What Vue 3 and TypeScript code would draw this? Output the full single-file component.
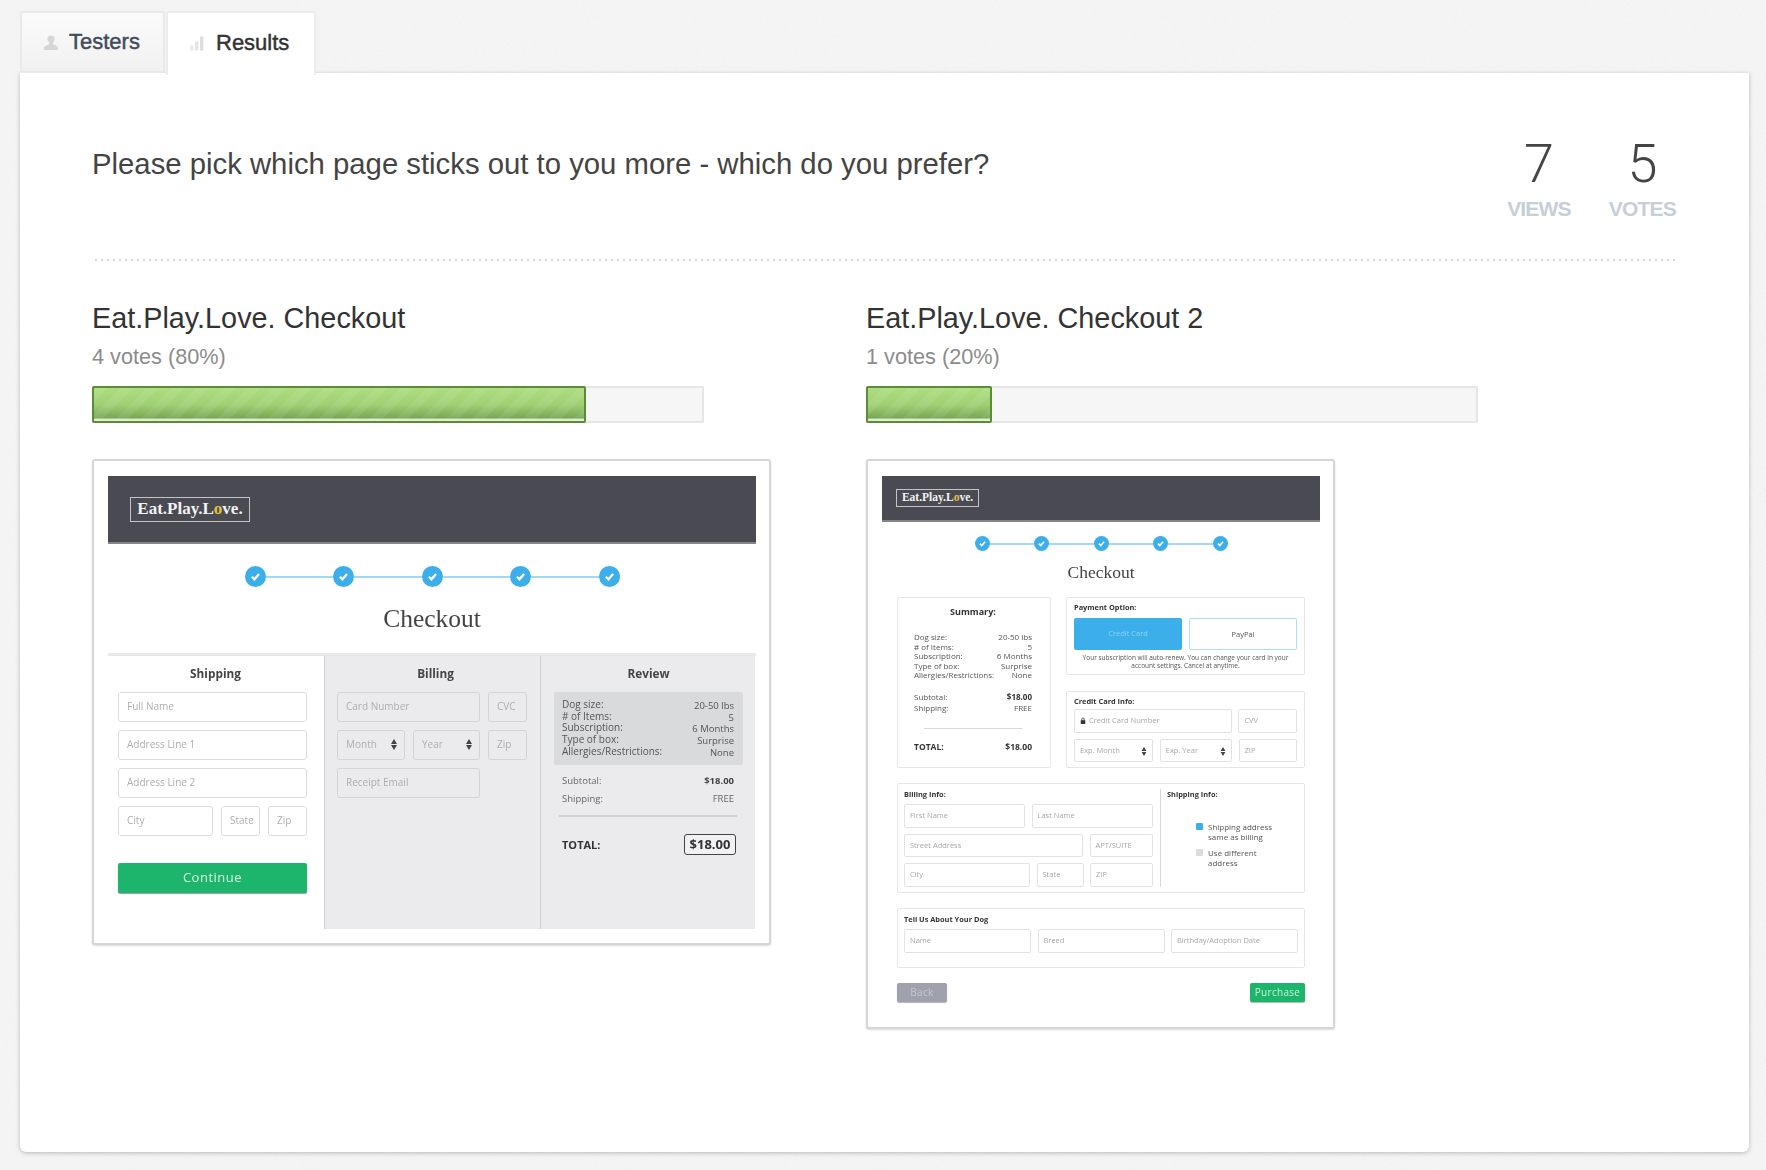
<template>
  <div class="page">
    <svg class="noise" aria-hidden="true">
      <filter id="paper">
        <feTurbulence type="fractalNoise" baseFrequency="0.9" numOctaves="2" seed="4" />
        <feColorMatrix values="0 0 0 0 0.84  0 0 0 0 0.84  0 0 0 0 0.84  0 0 0 1.4 -0.66" />
      </filter>
      <rect width="100%" height="100%" filter="url(#paper)" />
    </svg>

    <div class="tabs">
      <a class="tab">
        <svg class="tab-icon" viewBox="0 0 14 15">
          <circle cx="7" cy="4" r="3.6" fill="#d6d6d6" />
          <path d="M5 7h4v2l5 3v3H0v-3l5-3z" fill="#d6d6d6" />
        </svg>
        Testers
      </a>
      <a class="tab active">
        <svg class="tab-icon" viewBox="0 0 14 14">
          <rect x="0" y="9" width="3.4" height="5" fill="#e8e8e8" />
          <rect x="5" y="5" width="3.4" height="9" fill="#e4e4e4" />
          <rect x="10" y="0" width="3.4" height="14" fill="#dedede" />
        </svg>
        Results
      </a>
    </div>

    <main class="card">
      <header class="head">
        <h1>Please pick which page sticks out to you more - which do you prefer?</h1>
        <div class="stats">
          <div v-for="s in stats" :key="s.label" class="stat">
            <div class="num">{{ s.value }}</div>
            <div class="lbl">{{ s.label }}</div>
          </div>
        </div>
      </header>
      <div class="divider"></div>

      <div class="options">
        <section v-for="o in options" :key="o.title" class="option">
          <h2>{{ o.title }}</h2>
          <p class="votes">{{ o.votes }}</p>
          <div class="track">
            <div class="fill" :style="{ width: o.bar + '%' }"></div>
          </div>

          <!-- first mock: three columns -->
          <div v-if="o.kind === 'a'" class="frame frame-a">
            <div class="mock">
              <div class="m-head"><span class="logo">Eat.Play.L<i>o</i>ve.</span></div>
              <div class="steps">
                <template v-for="n in 5" :key="n">
                  <span v-if="n > 1" class="line"></span>
                  <span class="dot">
                    <svg viewBox="0 0 10 10"><path d="M3.3 5.1l1.2 1.2 2.2-2.5" /></svg>
                  </span>
                </template>
              </div>
              <div class="m-title">Checkout</div>
              <div class="panels">
                <div class="panel p1">
                  <div class="p-title">Shipping</div>
                  <div v-for="(row, i) in shipRows" :key="i" class="f-row">
                    <span v-for="f in row" :key="f.t" class="fld" :style="{ width: f.w + 'px' }">{{ f.t }}</span>
                  </div>
                  <div class="continue">Continue</div>
                </div>
                <div class="panel p2">
                  <div class="p-title">Billing</div>
                  <div v-for="(row, i) in billRows" :key="i" class="f-row">
                    <span v-for="f in row" :key="f.t" class="fld" :style="{ width: f.w + 'px' }">
                      {{ f.t }}<b v-if="f.sel" class="updown"></b>
                    </span>
                  </div>
                </div>
                <div class="panel p3">
                  <div class="p-title">Review</div>
                  <div class="r-box">
                    <div class="r-labels">
                      <span v-for="r in summary" :key="r[0]">{{ r[0] }}:</span>
                    </div>
                    <div class="r-vals">
                      <span v-for="r in summary" :key="r[0]">{{ r[1] }}</span>
                    </div>
                  </div>
                  <div class="r-line"><span>Subtotal:</span><b>$18.00</b></div>
                  <div class="r-line"><span>Shipping:</span><span>FREE</span></div>
                  <div class="r-rule"></div>
                  <div class="r-total"><b>TOTAL:</b><b class="price">$18.00</b></div>
                </div>
              </div>
            </div>
          </div>

          <!-- second mock: one long page -->
          <div v-else class="frame frame-b">
            <div class="mock">
              <div class="m-head"><span class="logo">Eat.Play.L<i>o</i>ve.</span></div>
              <div class="steps">
                <template v-for="n in 5" :key="n">
                  <span v-if="n > 1" class="line"></span>
                  <span class="dot">
                    <svg viewBox="0 0 10 10"><path d="M3.3 5.1l1.2 1.2 2.2-2.5" /></svg>
                  </span>
                </template>
              </div>
              <div class="m-title">Checkout</div>
              <div class="b-body">
                <div class="b-top">
                  <div class="box sum">
                    <div class="sum-title">Summary:</div>
                    <div v-for="r in summary" :key="r[0]" class="sum-row">
                      <span>{{ r[0] }}:</span><span>{{ r[1] }}</span>
                    </div>
                    <div class="sum-row sub"><span>Subtotal:</span><b>$18.00</b></div>
                    <div class="sum-row sub2"><span>Shipping:</span><span>FREE</span></div>
                    <div class="sum-rule"></div>
                    <div class="sum-row total"><b>TOTAL:</b><b>$18.00</b></div>
                  </div>
                  <div class="box pay">
                    <div class="box-title">Payment Option:</div>
                    <div class="pay-btns">
                      <span class="pay-cc">Credit Card</span>
                      <span class="pay-pp">PayPal</span>
                    </div>
                    <p class="pay-note">
                      Your subscription will auto-renew. You can change your card in your<br />
                      account settings. Cancel at anytime.
                    </p>
                  </div>
                  <div class="box cc">
                    <div class="box-title">Credit Card Info:</div>
                    <div v-for="(row, i) in ccRows" :key="i" class="s-row">
                      <span v-for="f in row" :key="f.t" class="sfld" :style="{ width: f.w + 'px' }">
                        <svg v-if="f.lock" class="lock" viewBox="0 0 8 9">
                          <path d="M2 4V2.6a2 2 0 0 1 4 0V4h1v5H1V4zM3 4h2V2.6a1 1 0 0 0-2 0z" fill="#333" />
                        </svg>
                        {{ f.t }}<b v-if="f.sel" class="updown small"></b>
                      </span>
                    </div>
                  </div>
                </div>

                <div class="box info">
                  <div class="info-left">
                    <div class="box-title">Billing Info:</div>
                    <div v-for="(row, i) in infoRows" :key="i" class="s-row">
                      <span v-for="f in row" :key="f.t" class="sfld" :style="{ width: f.w + 'px' }">{{ f.t }}</span>
                    </div>
                  </div>
                  <div class="info-right">
                    <div class="box-title">Shipping Info:</div>
                    <div class="check first"><i class="on"></i><span>Shipping address<br />same as billing</span></div>
                    <div class="check"><i></i><span>Use different<br />address</span></div>
                  </div>
                </div>

                <div class="box dog">
                  <div class="box-title">Tell Us About Your Dog</div>
                  <div class="s-row">
                    <span v-for="f in dogRow" :key="f.t" class="sfld" :style="{ width: f.w + 'px' }">{{ f.t }}</span>
                  </div>
                </div>

                <div class="actions">
                  <span class="back">Back</span>
                  <span class="purchase">Purchase</span>
                </div>
              </div>
            </div>
          </div>
        </section>
      </div>
    </main>
  </div>
</template>

<script setup lang="ts">
interface Field {
  t: string
  w: number
  sel?: boolean
  lock?: boolean
}

const stats = [
  { value: 7, label: 'VIEWS' },
  { value: 5, label: 'VOTES' },
]

const options = [
  { title: 'Eat.Play.Love. Checkout', votes: '4 votes (80%)', bar: 80.7, kind: 'a' },
  { title: 'Eat.Play.Love. Checkout 2', votes: '1 votes (20%)', bar: 20.6, kind: 'b' },
]

const summary = [
  ['Dog size', '20-50 lbs'],
  ['# of Items', '5'],
  ['Subscription', '6 Months'],
  ['Type of box', 'Surprise'],
  ['Allergies/Restrictions', 'None'],
]

const shipRows: Field[][] = [
  [{ t: 'Full Name', w: 189 }],
  [{ t: 'Address Line 1', w: 189 }],
  [{ t: 'Address Line 2', w: 189 }],
  [{ t: 'City', w: 95 }, { t: 'State', w: 39 }, { t: 'Zip', w: 39 }],
]

const billRows: Field[][] = [
  [{ t: 'Card Number', w: 143 }, { t: 'CVC', w: 39 }],
  [{ t: 'Month', w: 68, sel: true }, { t: 'Year', w: 67, sel: true }, { t: 'Zip', w: 39 }],
  [{ t: 'Receipt Email', w: 143 }],
]

const ccRows: Field[][] = [
  [{ t: 'Credit Card Number', w: 159, lock: true }, { t: 'CVV', w: 59 }],
  [{ t: 'Exp. Month', w: 80, sel: true }, { t: 'Exp. Year', w: 73, sel: true }, { t: 'ZIP', w: 59 }],
]

const infoRows: Field[][] = [
  [{ t: 'First Name', w: 121 }, { t: 'Last Name', w: 121 }],
  [{ t: 'Street Address', w: 179 }, { t: 'APT/SUITE', w: 63 }],
  [{ t: 'City', w: 126 }, { t: 'State', w: 47 }, { t: 'ZIP', w: 63 }],
]

const dogRow: Field[] = [
  { t: 'Name', w: 127 },
  { t: 'Breed', w: 127 },
  { t: 'Birthday/Adoption Date', w: 127 },
]
</script>

<style>
html,
body {
  margin: 0;
  background: #f4f4f4;
}
</style>

<style scoped>
.page {
  position: relative;
  box-sizing: border-box;
  width: 1766px;
  height: 1170px;
  padding: 11px 17px 18px 20px;
  font-family: "Liberation Sans", Arial, sans-serif;
  overflow: hidden;
}
.noise {
  position: absolute;
  left: 0;
  top: 0;
  width: 100%;
  height: 100%;
}

.tabs {
  position: relative;
  z-index: 2;
  display: flex;
  gap: 1px;
  height: 62px;
}
.tab {
  box-sizing: border-box;
  width: 145px;
  height: 62px;
  padding-left: 22px;
  display: flex;
  align-items: center;
  font-size: 22px;
  color: #414b5c;
  -webkit-text-stroke: 0.45px currentColor;
  background: linear-gradient(#fbfbfb, #f1f1f1);
  border: 2px solid #e9e9e9;
  border-radius: 3px 3px 0 0;
}
.tab.active {
  width: 150px;
  height: 64px;
  padding-left: 22px;
  padding-bottom: 2px;
  color: #333;
  background: #fff;
  border: 2px solid #ececec;
  border-bottom: 0;
}
.tab-icon {
  width: 14px;
  height: 15px;
  margin-right: 11px;
}
.tab.active .tab-icon {
  margin-right: 12px;
}

.card {
  position: relative;
  box-sizing: border-box;
  height: 1079px;
  padding: 64px 73px 0 72px;
  background: #fff;
  border-radius: 0 0 6px 6px;
  box-shadow: 0 1px 4px rgba(0, 0, 0, 0.25);
}

.head {
  display: flex;
  justify-content: space-between;
  padding-bottom: 38px;
}
.divider {
  height: 2px;
  margin-left: 3px;
  background: linear-gradient(to right, #d8d8d8 2px, transparent 2px) 0 0 / 6px 2px repeat-x;
}
h1 {
  margin: 7px 0 0;
  font-size: 29.3px;
  line-height: 40px;
  font-weight: 400;
  color: #444;
}
.stats {
  display: flex;
  gap: 38px;
}
.stat {
  text-align: center;
}
.num {
  font-family: Roboto, sans-serif;
  font-weight: 300;
  font-size: 54px;
  line-height: 54px;
  color: #444;
}
.lbl {
  margin-top: 6px;
  font-size: 21px;
  line-height: 24px;
  font-weight: 700;
  letter-spacing: -0.8px;
  color: #c6cfd7;
}

.options {
  display: grid;
  grid-template-columns: 774px 1fr;
  padding-top: 37px;
}
h2 {
  margin: 0;
  font-size: 28.8px;
  line-height: 40px;
  font-weight: 400;
  color: #333;
}
.votes {
  margin: 5px 0 0;
  font-size: 21.7px;
  line-height: 28px;
  color: #8c8c8c;
}
.track {
  width: 612px;
  height: 37px;
  margin-top: 15px;
  background: #f6f6f6;
  box-shadow: inset 0 0 0 2px #e6e6e6;
  border-radius: 2px;
}
.fill {
  box-sizing: border-box;
  height: 37px;
  border: 2px solid #5b8c37;
  border-radius: 2px;
  background:
    repeating-linear-gradient(-45deg, rgba(255, 255, 255, 0.07) 0 9px, transparent 9px 18px),
    linear-gradient(#aedd80 0%, #a0d074 50%, #78a655 92%, #dfeed0 93%);
}

.frame {
  box-sizing: border-box;
  margin-top: 36px;
  background: #fff;
  border: 2px solid #d6d6d6;
  border-radius: 3px;
  box-shadow: 0 1px 2px rgba(0, 0, 0, 0.15);
  padding: 15px 13px 14px;
}
.frame-a {
  width: 679px;
  height: 486px;
  padding-left: 14px;
}
.frame-b {
  width: 469px;
  height: 570px;
  padding-left: 14px;
}
.mock {
  filter: blur(0.6px);
  font-family: "Open Sans", sans-serif;
}

.m-head {
  box-sizing: border-box;
  display: flex;
  align-items: center;
  height: 68px;
  padding-left: 22px;
  background: #4a4a52;
  border-bottom: 2px solid #85858a;
}
.frame-b .m-head {
  height: 46px;
  padding-left: 14px;
}
.logo {
  box-sizing: border-box;
  width: 120px;
  height: 25px;
  border: 1.5px solid #c4c4c6;
  font-family: "Liberation Serif", serif;
  font-weight: 700;
  font-size: 17px;
  line-height: 22px;
  text-align: center;
  color: #f2f2f2;
}
.logo i {
  font-style: normal;
  color: #e6bf3e;
}
.frame-b .logo {
  width: 83px;
  height: 18px;
  font-size: 11.5px;
  line-height: 15px;
  border-width: 1px;
}

.steps {
  display: flex;
  align-items: center;
  justify-content: center;
  margin-top: 22px;
}
.frame-b .steps {
  margin-top: 14px;
}
.dot {
  flex: none;
  width: 21px;
  height: 21px;
  border-radius: 50%;
  background: #3caeea;
}
.dot svg {
  display: block;
  fill: none;
  stroke: #fff;
  stroke-width: 1.1;
}
.line {
  width: 67.5px;
  height: 2px;
  background: #9fd8f8;
}
.frame-b .dot {
  width: 15px;
  height: 15px;
}
.frame-b .line {
  width: 44.5px;
}

.m-title {
  margin-top: 15px;
  font-family: "Liberation Serif", serif;
  font-size: 25.5px;
  line-height: 34px;
  text-align: center;
  color: #444;
}
.frame-b .m-title {
  margin-top: 10px;
  font-size: 17.5px;
  line-height: 22px;
}

.panels {
  display: grid;
  grid-template-columns: 216px 216px 215px;
  height: 276px;
  margin-top: 17px;
  border-top: 3px solid #e9e9eb;
  box-sizing: border-box;
  font-size: 10px;
}
.panel {
  box-sizing: border-box;
  padding-top: 9px;
}
.p1 {
  padding-left: 10px;
}
.p2,
.p3 {
  background: #ebebed;
  border-left: 1px solid #cfcfd1;
}
.p2 {
  padding-left: 12px;
}
.p3 {
  padding: 9px 12px 0 13px;
}
.p-title {
  height: 16px;
  margin-bottom: 11px;
  font-size: 11.8px;
  line-height: 16px;
  font-weight: 700;
  text-align: center;
  color: #444;
}
.p1 .p-title {
  padding-left: 3px;
  width: 189px;
}
.p2 .p-title {
  width: 197px;
}
.f-row {
  display: flex;
  gap: 8px;
  margin-bottom: 8px;
}
.fld {
  box-sizing: border-box;
  position: relative;
  height: 30px;
  padding-left: 8px;
  border: 1.5px solid #dcdcde;
  border-radius: 3px;
  font-size: 10px;
  line-height: 27px;
  color: #aeaeb0;
  white-space: nowrap;
}
.p2 .fld {
  border-color: #d4d4d6;
}
.updown {
  position: absolute;
  right: 7px;
  top: 8px;
  width: 6px;
  height: 11px;
}
.updown::before,
.updown::after {
  content: "";
  position: absolute;
  left: 0;
  border-left: 3px solid transparent;
  border-right: 3px solid transparent;
}
.updown::before {
  top: 0;
  border-bottom: 5px solid #444;
}
.updown::after {
  bottom: 0;
  border-top: 5px solid #444;
}
.updown.small {
  top: 6px;
  right: 5px;
  transform: scale(0.8);
}
.continue {
  width: 189px;
  height: 30px;
  margin-top: 27px;
  background: #1db56c;
  border-radius: 2px;
  box-shadow: 0 1px 1px rgba(0, 0, 0, 0.4);
  font-size: 13px;
  line-height: 29px;
  letter-spacing: 0.5px;
  text-align: center;
  color: #d8f5e6;
}

.r-box {
  display: flex;
  justify-content: space-between;
  height: 73px;
  padding: 7px 9px 7px 8px;
  box-sizing: border-box;
  background: #d9dadc;
  border-radius: 2px;
  font-size: 9.5px;
  line-height: 11.7px;
  color: #555;
}
.r-labels,
.r-vals {
  display: flex;
  flex-direction: column;
}
.r-labels {
  font-size: 10px;
}
.r-vals {
  align-items: flex-end;
  padding-top: 1px;
}
.r-line {
  display: flex;
  justify-content: space-between;
  padding: 0 9px 0 8px;
  margin-top: 8px;
  font-size: 9.5px;
  line-height: 10px;
  color: #666;
}
.r-line b {
  color: #444;
}
.r-box + .r-line {
  margin-top: 11px;
}
.r-rule {
  height: 2px;
  margin: 11px 6px 0 5px;
  background: #d2d2d4;
}
.r-total {
  display: flex;
  justify-content: space-between;
  align-items: center;
  padding: 0 7px 0 8px;
  margin-top: 17px;
  font-size: 11px;
  color: #333;
}
.price {
  box-sizing: border-box;
  width: 52px;
  height: 21px;
  border: 1.5px solid #444;
  border-radius: 3px;
  font-size: 13px;
  line-height: 18px;
  text-align: center;
  background: #f1f1f3;
}

.b-body {
  padding: 14px 15px 0;
  font-size: 8px;
  color: #555;
}
.b-top {
  display: grid;
  grid-template-columns: 154px 239px;
  grid-template-rows: 78px 77px;
  gap: 16px 15px;
}
.box {
  box-sizing: border-box;
  border: 1px solid #e6e6e6;
  border-radius: 2px;
  padding: 5px 6px;
}
.pay,
.cc {
  padding: 4px 7px;
}
.box-title {
  height: 10px;
  margin-bottom: 5px;
  font-size: 7.4px;
  line-height: 10px;
  font-weight: 700;
  color: #333;
  white-space: nowrap;
}
.pay .box-title {
  margin-bottom: 6px;
}
.cc .box-title {
  margin-bottom: 3px;
}
.sum {
  grid-row: 1 / span 2;
  padding: 9px 18px 0 16px;
}
.sum-title {
  font-size: 9px;
  line-height: 10px;
  font-weight: 700;
  text-align: center;
  margin-bottom: 15px;
  color: #333;
}
.sum-row {
  display: flex;
  justify-content: space-between;
  font-size: 8px;
  line-height: 9.5px;
  white-space: nowrap;
}
.sum-row.sub {
  margin-top: 12px;
}
.sum-row.sub2 {
  margin-top: 2px;
}
.sum-row b {
  color: #333;
}
.sum-rule {
  height: 1px;
  margin: 15px 10px 13px;
  background: #d8d8d8;
}
.sum-row.total {
  font-size: 8.5px;
}
.pay-btns {
  display: flex;
  gap: 7px;
}
.pay-cc,
.pay-pp {
  box-sizing: border-box;
  width: 108px;
  height: 32px;
  border-radius: 2px;
  font-size: 7.5px;
  line-height: 30px;
  text-align: center;
}
.pay-cc {
  background: #3caeea;
  color: #8fd3f5;
}
.pay-pp {
  border: 1.5px solid #a8dcf7;
  color: #555;
}
.pay-note {
  margin: 4px 0 0;
  font-size: 6.5px;
  line-height: 8px;
  text-align: center;
  color: #555;
  white-space: nowrap;
}
.s-row {
  display: flex;
  gap: 6.5px;
  margin-bottom: 6px;
}
.sfld {
  position: relative;
  box-sizing: border-box;
  height: 23.5px;
  padding-left: 5px;
  border: 1px solid #e2e2e2;
  border-radius: 2px;
  font-size: 7.5px;
  line-height: 21px;
  color: #a8a8a8;
  white-space: nowrap;
}
.lock {
  width: 6px;
  height: 7px;
  margin-right: 1px;
  vertical-align: -1px;
}
.info {
  display: flex;
  height: 110px;
  margin-top: 15px;
}
.info-left {
  width: 250px;
  padding-right: 6px;
  border-right: 1px solid #d8d8d8;
}
.info-right {
  padding-left: 6px;
}
.check {
  display: flex;
  gap: 5px;
  margin: 7px 0 0 29px;
  font-size: 8px;
  line-height: 9.5px;
  white-space: nowrap;
}
.check.first {
  margin-top: 23px;
}
.check i {
  flex: none;
  width: 7px;
  height: 7px;
  margin-top: 1px;
  border-radius: 1px;
  background: #dcdcdc;
}
.check i.on {
  background: #3caeea;
}
.dog {
  height: 60px;
  margin-top: 15px;
}
.actions {
  display: flex;
  justify-content: space-between;
  margin-top: 15px;
}
.back,
.purchase {
  height: 19px;
  border-radius: 2px;
  box-shadow: 0 1px 1px rgba(0, 0, 0, 0.3);
  font-size: 10px;
  line-height: 19px;
  letter-spacing: 0.3px;
  text-align: center;
}
.back {
  width: 50px;
  background: #9fa1ac;
  color: #c6c7cf;
}
.purchase {
  width: 55px;
  background: #1db56c;
  color: #c6f0da;
}
</style>
